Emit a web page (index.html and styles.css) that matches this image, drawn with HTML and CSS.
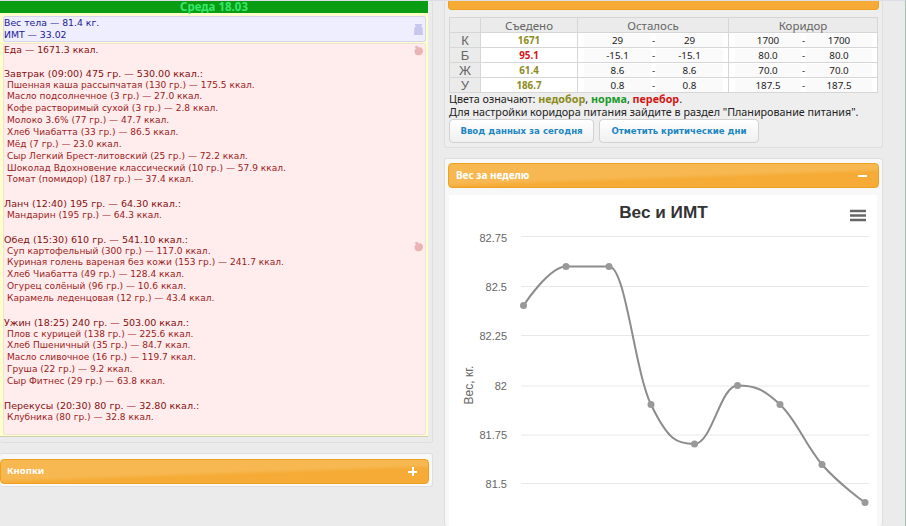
FILE: index.html
```html
<!DOCTYPE html>
<html lang="en">
<head>
  <meta charset="UTF-8">
  <title>Среда 18.03</title>
  <link rel="stylesheet" href="styles.css">
</head>
<body>
  <div class="page">
    <div class="left-col">
      <div class="panel day-panel">
        <div class="day-title">Среда 18.03</div>
        <div class="day-body">
          <div class="weight-box">
            <svg class="corner-icon" viewBox="0 0 9 11"><path class="weight-shape" d="M1 0H8V1.500L6.500 3H8.500L9 11H0L.5 3H2.500L1 1.500Z"/></svg>
            Вес тела — 81.4 кг.<br>
            ИМТ — 33.02
          </div>
          <div class="food-box">
            <svg class="corner-icon" viewBox="0 0 9 10"><use href="#apple"/></svg>
            <svg class="corner-icon second" viewBox="0 0 9 10"><use href="#apple"/></svg>
            <div class="food-total">Еда — 1671.3 ккал.</div>

            <div class="meal">
              <div class="meal-title">Завтрак (09:00) 475 гр. — 530.00 ккал.:</div>
              <div class="meal-item">Пшенная каша рассыпчатая (130 гр.) — 175.5 ккал.</div>
              <div class="meal-item">Масло подсолнечное (3 гр.) — 27.0 ккал.</div>
              <div class="meal-item">Кофе растворимый сухой (3 гр.) — 2.8 ккал.</div>
              <div class="meal-item">Молоко 3.6% (77 гр.) — 47.7 ккал.</div>
              <div class="meal-item">Хлеб Чиабатта (33 гр.) — 86.5 ккал.</div>
              <div class="meal-item">Мёд (7 гр.) — 23.0 ккал.</div>
              <div class="meal-item">Сыр Легкий Брест-литовский (25 гр.) — 72.2 ккал.</div>
              <div class="meal-item">Шоколад Вдохновение классический (10 гр.) — 57.9 ккал.</div>
              <div class="meal-item">Томат (помидор) (187 гр.) — 37.4 ккал.</div>
            </div>

            <div class="meal">
              <div class="meal-title">Ланч (12:40) 195 гр. — 64.30 ккал.:</div>
              <div class="meal-item">Мандарин (195 гр.) — 64.3 ккал.</div>
            </div>

            <div class="meal">
              <div class="meal-title">Обед (15:30) 610 гр. — 541.10 ккал.:</div>
              <div class="meal-item">Суп картофельный (300 гр.) — 117.0 ккал.</div>
              <div class="meal-item">Куриная голень вареная без кожи (153 гр.) — 241.7 ккал.</div>
              <div class="meal-item">Хлеб Чиабатта (49 гр.) — 128.4 ккал.</div>
              <div class="meal-item">Огурец солёный (96 гр.) — 10.6 ккал.</div>
              <div class="meal-item">Карамель леденцовая (12 гр.) — 43.4 ккал.</div>
            </div>

            <div class="meal">
              <div class="meal-title">Ужин (18:25) 240 гр. — 503.00 ккал.:</div>
              <div class="meal-item">Плов с курицей (138 гр.) — 225.6 ккал.</div>
              <div class="meal-item">Хлеб Пшеничный (35 гр.) — 84.7 ккал.</div>
              <div class="meal-item">Масло сливочное (16 гр.) — 119.7 ккал.</div>
              <div class="meal-item">Груша (22 гр.) — 9.2 ккал.</div>
              <div class="meal-item">Сыр Фитнес (29 гр.) — 63.8 ккал.</div>
            </div>

            <div class="meal">
              <div class="meal-title">Перекусы (20:30) 80 гр. — 32.80 ккал.:</div>
              <div class="meal-item">Клубника (80 гр.) — 32.8 ккал.</div>
            </div>
          </div>
        </div>
      </div>

      <div class="panel buttons-panel">
        <div class="bar">
          <span>Кнопки</span>
          <span class="bar-toggle plus"></span>
        </div>
      </div>
    </div>

    <div class="right-col">
      <div class="panel norms-panel">
        <div class="bar cut-bar"></div>
        <table class="norms">
          <tr>
            <th class="letter"></th>
            <th class="eaten-col">Съедено</th>
            <th class="left-col-cell">Осталось</th>
            <th>Коридор</th>
          </tr>
          <tr>
            <th class="row-head">К</th>
            <td class="low">1671</td>
            <td><div class="range"><span>29</span><i>-</i><span>29</span></div></td>
            <td><div class="range"><span>1700</span><i>-</i><span>1700</span></div></td>
          </tr>
          <tr>
            <th class="row-head">Б</th>
            <td class="over">95.1</td>
            <td><div class="range"><span>-15.1</span><i>-</i><span>-15.1</span></div></td>
            <td><div class="range"><span>80.0</span><i>-</i><span>80.0</span></div></td>
          </tr>
          <tr>
            <th class="row-head">Ж</th>
            <td class="low">61.4</td>
            <td><div class="range"><span>8.6</span><i>-</i><span>8.6</span></div></td>
            <td><div class="range"><span>70.0</span><i>-</i><span>70.0</span></div></td>
          </tr>
          <tr>
            <th class="row-head">У</th>
            <td class="low">186.7</td>
            <td><div class="range"><span>0.8</span><i>-</i><span>0.8</span></div></td>
            <td><div class="range"><span>187.5</span><i>-</i><span>187.5</span></div></td>
          </tr>
        </table>
        <p class="note">Цвета означают: <b class="low">недобор</b>, <b class="norm">норма</b>, <b class="over">перебор</b>.</p>
        <p class="note">Для настройки коридора питания зайдите в раздел "Планирование питания".</p>
        <div class="actions">
          <button class="action first">Ввод данных за сегодня</button>
          <button class="action second">Отметить критические дни</button>
        </div>
      </div>

      <div class="panel chart-panel">
        <div class="bar">
          <span>Вес за неделю</span>
          <span class="bar-toggle"></span>
        </div>
        <div class="chart">
          <svg class="chart-svg" viewBox="449 195 428 331">
            <text class="chart-title" x="663.500" y="218">Вес и ИМТ</text>
            <path class="chart-menu" d="M850 211H866M850 215.500H866M850 220H866"/>
            <path class="grid" d="M521 236.500H869M521 286.500H869M521 335.500H869M521 386H869M521 435H869M521 483.500H869"/>
            <text class="tick" x="507" y="242">82.75</text>
            <text class="tick" x="507" y="291">82.5</text>
            <text class="tick" x="507" y="340">82.25</text>
            <text class="tick" x="507" y="390">82</text>
            <text class="tick" x="507" y="439">81.75</text>
            <text class="tick" x="507" y="488">81.5</text>
            <text class="axis-title" transform="translate(472.500 385) rotate(-90)">Вес, кг.</text>
            <path class="line" d="M523.500 305.500C523.500 305.500 549 266.500 566 266.500C583 266.500 591.800 266.500 609 266.500C625.800 266.500 634.200 369.600 651 404.500C668.400 440.600 677.100 444 694.500 444C711.900 444 720.300 385.500 737.500 385.500C754.500 385.500 763 388.600 780 404.500C796.800 420.200 805.200 445.100 822 464.500C839.200 484.300 865 502.500 865 502.500"/>
            <g class="dots">
              <circle cx="523.500" cy="305.500" r="3.500"/>
              <circle cx="566" cy="266.500" r="3.500"/>
              <circle cx="609" cy="266.500" r="3.500"/>
              <circle cx="651" cy="404.500" r="3.500"/>
              <circle cx="694.500" cy="444" r="3.500"/>
              <circle cx="737.500" cy="385.500" r="3.500"/>
              <circle cx="780" cy="404.500" r="3.500"/>
              <circle cx="822" cy="464.500" r="3.500"/>
              <circle cx="865" cy="502.500" r="3.500"/>
            </g>
          </svg>
        </div>
      </div>
    </div>
  </div>

  <svg class="defs" width="0" height="0">
    <symbol id="apple" viewBox="0 0 9 10">
      <path class="apple-shape" d="M0 1.500L3 0L4.500 1.800C7 1.200 9 3 9 5.500C9 8 7 10 4.500 10C2 10 .5 8 .5 5.500C.5 4 1.500 3 2.500 2.500Z"/>
    </symbol>
  </svg>
</body>
</html>
```

FILE: styles.css
```css
html, body {
  margin: 0;
  height: 526px;
  overflow: hidden;
}

body {
  background-color: #ebebeb;
  font-family: "Noto Sans", sans-serif;
}

.page {
  display: flex;
  gap: 11px;
  height: 525px;
  width: 905px;
  border-top: 1px solid #dcdee6;
  border-right: 1px solid #a9c2ae;
}

.left-col {
  display: flex;
  flex-direction: column;
  gap: 10px;
  width: 433px;
  flex-shrink: 0;
}

.right-col {
  display: flex;
  flex-direction: column;
  gap: 10px;
  width: 439px;
  flex-shrink: 0;
}

.panel {
  border: 1px solid #dedede;
  border-radius: 3px;
}

/* left side */
.day-panel {
  border-top: none;
  border-left: none;
  padding-right: 4px;
  padding-bottom: 5px;
}

.day-title {
  height: 12px;
  background-color: #0a9c12;
  color: #35e86a;
  font-size: 11.500px;
  font-weight: bold;
  line-height: 12px;
  text-align: center;
}

.day-body {
  padding: 3px 2px 1px 3px;
  background-color: #ffffcc;
  border-bottom: 1px solid #cfcfb5;
  font-family: "DejaVu Sans", sans-serif;
  font-size: 9.300px;
  line-height: 11.860px;
}

.weight-box, .food-box {
  position: relative;
  border: 1px solid #d5d5f0;
  border-radius: 2px;
  background-color: #eeeeff;
  color: #1a1a96;
}

.weight-box {
  height: 24px;
  margin-bottom: 1px;
}

.food-box {
  border-color: #f0e2d6;
  background-color: #ffeded;
  color: #9c1c1c;
  height: 390px;
}

.corner-icon {
  position: absolute;
  top: 7px;
  right: 2px;
  width: 9px;
  height: 11px;
}

.food-box .corner-icon {
  top: 1px;
}

.food-box .corner-icon.second {
  top: 197px;
}

.weight-shape {
  fill: #c6c6ee;
}

.apple-shape {
  fill: #ebb4b4;
}

.defs {
  position: absolute;
}

.food-total, .meal-title {
  color: #861010;
}

.meal-title {
  font-size: 9.550px;
}

.food-total, .meal {
  margin-bottom: 11.860px;
}

.meal-item {
  padding-left: 3px;
  font-size: 9.050px;
}

/* orange bars */
.bar {
  display: flex;
  align-items: center;
  justify-content: space-between;
  box-sizing: border-box;
  height: 25px;
  padding: 0 11px 2px 7px;
  border: 1px solid #f0a020;
  border-radius: 4px;
  background: linear-gradient(178deg, #f7b851 0%, #f7b851 50%, #f5ab35 62%, #f5ab35 100%);
  color: #fff;
  font-size: 10px;
  font-weight: bold;
}

.bar-toggle {
  width: 9px;
  height: 2px;
  margin-top: 2px;
  background-color: #fff;
}

.bar-toggle.plus {
  position: relative;
}

.bar-toggle.plus::after {
  content: "";
  position: absolute;
  left: 3.500px;
  top: -3.500px;
  width: 2px;
  height: 9px;
  background-color: #fff;
}

.buttons-panel {
  border-left: none;
  padding: 5px 3px 2px 0;
  background-color: #f8f8f8;
}

.buttons-panel .bar {
  padding-left: 6px;
  font-size: 9.500px;
}

/* right side: table */
.norms-panel {
  height: 146px;
  border-top: none;
  padding: 0 3px;
  background-color: #eeeeee;
}

.cut-bar {
  height: 9px;
  border-top: none;
  border-radius: 0 0 4px 4px;
  padding: 0;
  background: #f5ab35;
}

.norms {
  width: 429px;
  margin: 7px 0 0 1px;
  border-collapse: collapse;
  table-layout: fixed;
  font-size: 9.800px;
  color: #222;
}

.norms th, .norms td {
  box-sizing: border-box;
  height: 15px;
  padding: 0;
  border: 1px solid #d6d6d6;
  text-align: center;
  line-height: 13px;
}

.norms th {
  background-color: #ebebeb;
  color: #666;
  font-size: 11.500px;
  font-weight: normal;
}

.norms th.row-head {
  font-family: "Liberation Sans", sans-serif;
  font-size: 13px;
}

.norms td {
  background-color: #fff;
  padding: 0 5px 0 6px;
}

.norms td.low, .norms td.over {
  padding: 0;
  font-weight: bold;
}

.norms .letter {
  width: 31px;
}

.eaten-col {
  width: 97px;
}

.left-col-cell {
  width: 151px;
}

.range {
  display: flex;
  align-items: center;
}

.range span {
  flex: 1;
  background-color: #fafafa;
}

.range i {
  width: 5px;
  font-style: normal;
}

.low {
  color: #8c8c1c;
}

.norm {
  color: #1a9a2a;
}

.over {
  color: #d41414;
}

.note {
  margin: 0 0 0 1px;
  font-size: 10.750px;
  line-height: 13px;
  color: #222;
}

.actions {
  display: flex;
  gap: 5px;
  margin: 0 0 0 1px;
}

.action {
  height: 24px;
  padding: 0;
  border: 1px solid #d2d2d2;
  border-radius: 4px;
  background: linear-gradient(#fff, #f0f0f0);
  color: #1d86c2;
  font-family: "DejaVu Sans", sans-serif;
  font-size: 8.600px;
  font-weight: bold;
}

.action.first {
  width: 145px;
}

.action.second {
  width: 160px;
}

/* right side: chart */
.chart-panel {
  flex: 1;
  padding: 4px 3px 0;
  background-color: #f8f8f8;
  border-bottom: none;
}

.chart {
  margin: 7px 0 0 1px;
  width: 428px;
  height: 331px;
  background-color: #fff;
}

.chart-svg {
  display: block;
  width: 428px;
  height: 331px;
  font-family: "Liberation Sans", sans-serif;
}

.chart-title {
  fill: #333;
  font-size: 17.200px;
  font-weight: bold;
  text-anchor: middle;
}

.chart-menu {
  fill: none;
  stroke: #666;
  stroke-width: 2.500;
}

.grid {
  fill: none;
  stroke: #e8e8e8;
  stroke-width: 1;
}

.tick {
  fill: #666;
  font-size: 11px;
  text-anchor: end;
}

.axis-title {
  fill: #666;
  font-size: 12px;
  text-anchor: middle;
}

.line {
  fill: none;
  stroke: #8c8c8c;
  stroke-width: 2;
}

.dots circle {
  fill: #999;
}
```
